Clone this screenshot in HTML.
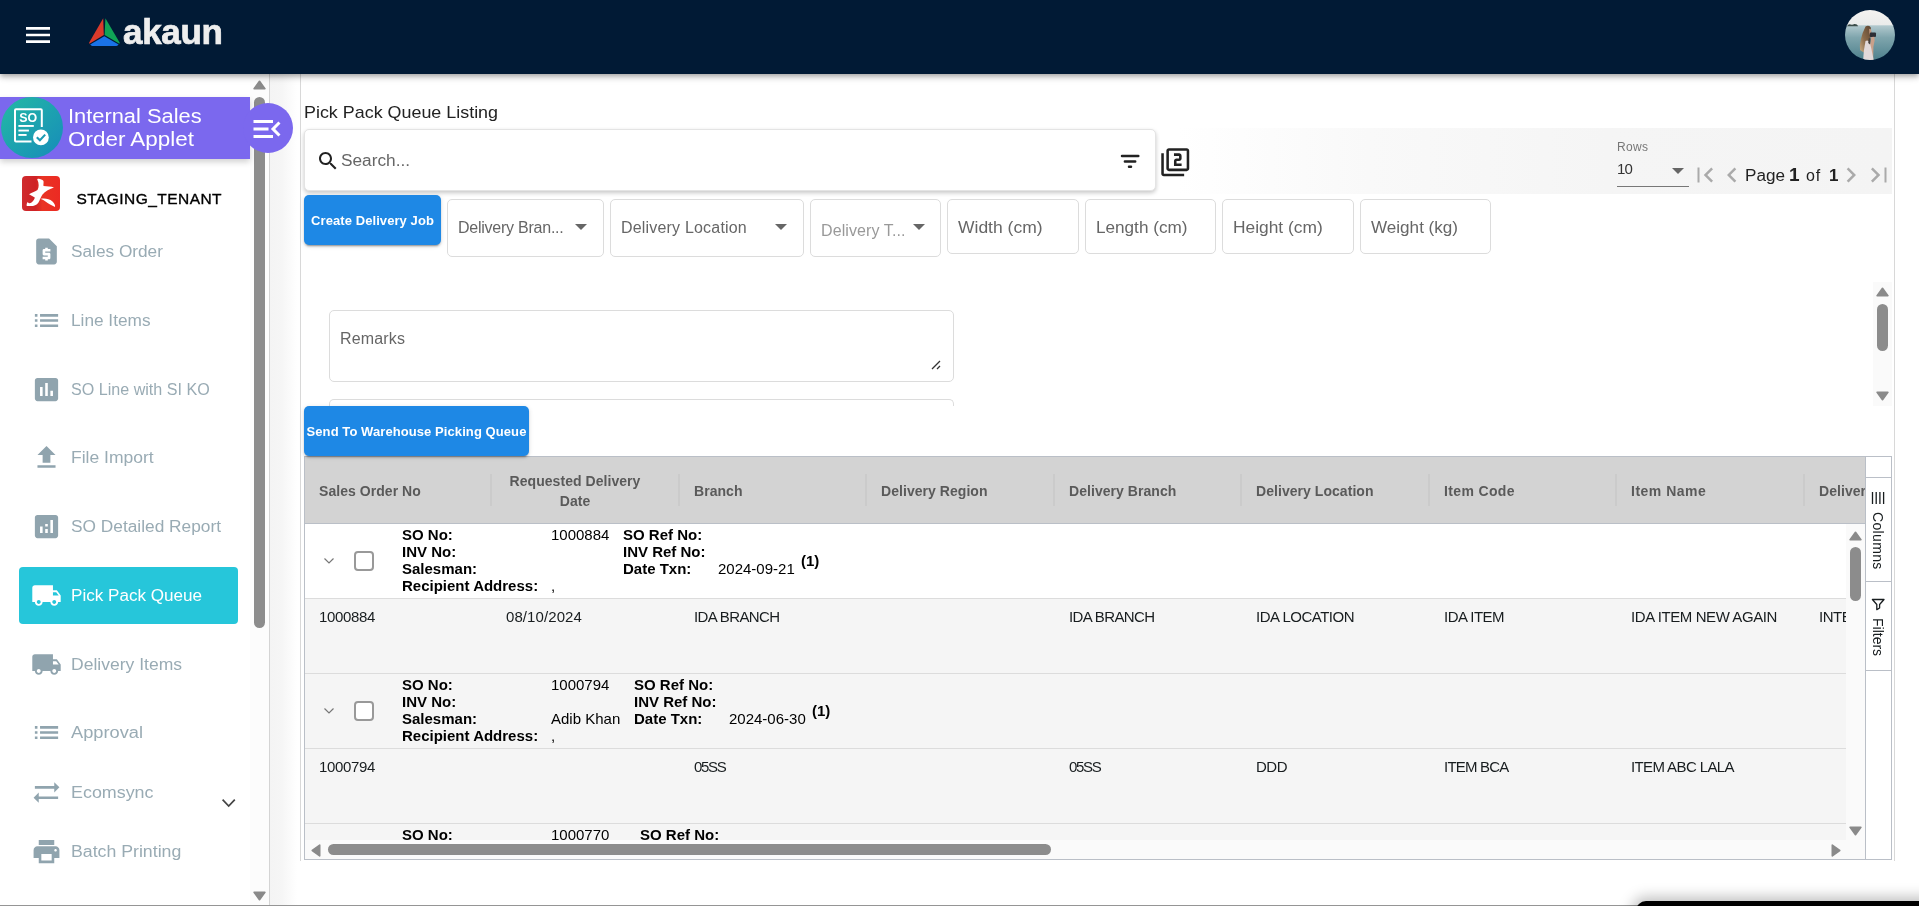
<!DOCTYPE html>
<html lang="en">
<head>
<meta charset="utf-8">
<title>Internal Sales Order Applet - Pick Pack Queue Listing</title>
<style>
*{box-sizing:border-box;margin:0;padding:0}
html,body{width:1919px;height:906px;overflow:hidden;background:#fff}
body{will-change:transform;position:relative;font-family:"Liberation Sans",sans-serif;color:#222}
.abs{position:absolute}
.t{position:absolute;white-space:nowrap;line-height:1;transform-origin:0 50%}
svg{display:block}
/* header */
#hdr{position:absolute;left:0;top:0;width:1919px;height:74px;background:#011a35;box-shadow:0 2px 4px -1px rgba(0,0,0,.2),0 4px 5px 0 rgba(0,0,0,.14),0 1px 10px 0 rgba(0,0,0,.12);z-index:20}
/* sidebar */
#side{position:absolute;left:0;top:74px;width:270px;height:832px;background:#fff;border-right:1px solid #d4d4d4;z-index:5}
.nav{position:absolute;left:19px;width:219px;height:57px;border-radius:4px}
.nav svg{position:absolute;left:11.500px;top:12.500px;width:31px;height:31px;fill:#90a4ae}
.nav span{position:absolute;left:52px;top:0;transform-origin:0 50%;line-height:58px;font-size:16px;color:#99abb4;white-space:nowrap}
.nav.sel{background:#26c6da}
.nav.sel svg{fill:#fff}
.nav.sel span{color:#fff}
/* main */
#gap{position:absolute;left:270px;top:74px;width:30px;height:832px;background:linear-gradient(to right,#f4f4f4 0%,#f6f6f6 40%,#fff 90%)}
#card{position:absolute;left:300px;top:74px;width:1595px;height:787px;border-left:1px solid #d8d8d8;border-right:1px solid #d8d8d8;background:#fff}
.fld{position:absolute;border:1px solid #dcdcdc;border-radius:5px;background:#fff}
.fld span{position:absolute;left:10px;transform-origin:0 50%;font-size:16px;color:#666;white-space:nowrap;line-height:1}
.btn{position:absolute;background:#1e88e5;border-radius:5px;color:#fff;font-weight:700;font-size:13px;text-align:center;white-space:nowrap;box-shadow:0 3px 1px -2px rgba(0,0,0,.2),0 2px 2px 0 rgba(0,0,0,.14),0 1px 5px 0 rgba(0,0,0,.12)}
.tri{position:absolute;width:0;height:0;border-left:6px solid transparent;border-right:6px solid transparent;border-top:6px solid #666}
/* grid */
#grid{position:absolute;left:304px;top:456px;width:1588px;height:404px;border:1px solid #babfc7;background:#fff;overflow:hidden}
.hc{position:absolute;font-size:14px;font-weight:700;color:#5a5a5a;letter-spacing:.05px;line-height:20px;white-space:nowrap}
.sep{position:absolute;top:17px;width:2px;height:32px;background:#cbcbcb}
.row{position:absolute;left:0;width:1543px;height:75px;border-bottom:1px solid #dcdcdc;background:#f5f5f5}
.c{position:absolute;top:9px;font-size:15px;color:#181d1f;white-space:nowrap;line-height:17px;letter-spacing:-.35px}
.g{position:absolute;font-size:15px;line-height:17px;white-space:nowrap;color:#000}
.g b{font-weight:700}
.cb{position:absolute;left:49px;top:27px;width:20px;height:20px;border:2px solid #999;border-radius:4px;background:#fff}
</style>
</head>
<body>

<!-- ================= HEADER ================= -->
<div id="hdr">
  <svg class="abs" style="left:22px;top:19px" width="32" height="32" viewBox="0 0 24 24"><path fill="#fff" d="M3 18h18v-2H3v2zm0-5h18v-2H3v2zm0-7v2h18V6H3z"/></svg>
  <svg class="abs" style="left:88px;top:16.500px" width="33" height="30" viewBox="0 0 33 30">
    <path d="M15.2 1.2 L1.2 25.5 Q0.6 26.8 1.8 26.4 L15.8 18 Z" fill="#d93a2b"/>
    <path d="M17.4 1.2 L31.6 25.5 Q32.2 26.8 31 26.4 L16.6 18 Z" fill="#10a356"/>
    <path d="M16.3 19.2 L2.2 27.6 Q3 29 4.4 29 L28.4 29 Q29.8 29 30.6 27.6 Z" fill="#1a73e8"/>
  </svg>
  <span class="t" id="logo" style="left:123px;top:14px;font-size:35px;font-weight:700;color:#eee;letter-spacing:-.3px;-webkit-text-stroke:.7px #eee">akaun</span>
  <svg class="abs" style="left:1845px;top:10px" width="50" height="50" viewBox="0 0 50 50">
    <defs><clipPath id="av"><circle cx="25" cy="25" r="25"/></clipPath>
    <linearGradient id="sky" x1="0" y1="0" x2="0" y2="1"><stop offset="0" stop-color="#f4f3f1"/><stop offset="1" stop-color="#e9ebea"/></linearGradient>
    <linearGradient id="sea" x1="0" y1="0" x2="0" y2="1"><stop offset="0" stop-color="#b3cacf"/><stop offset=".35" stop-color="#7fa5ad"/><stop offset="1" stop-color="#4d808c"/></linearGradient>
    <linearGradient id="hair" x1="1" y1="0" x2="0" y2="1"><stop offset="0" stop-color="#5a4330"/><stop offset=".55" stop-color="#8a6a4a"/><stop offset="1" stop-color="#c9ad86"/></linearGradient></defs>
    <g clip-path="url(#av)">
      <rect width="50" height="16" fill="url(#sky)"/>
      <rect y="15.300" width="50" height="35" fill="url(#sea)"/>
      <path d="M2 16.200 q1.500 -2.600 3.800 -1.600 q2 .5 3.400 -.6 q2.800 -.4 4 2.200 z" fill="#3c4d4a"/>
      <path d="M20.500 16.500 q3 -1.600 5.200 .8 l.6 5.600 l-1.400 7 l-1.500 5 l-3 8 q-3 -1 -5.400 -3 q-.6 -5 .8 -10.500 q1.300 -6 4.700 -12.900 z" fill="url(#hair)"/>
      <path d="M24.200 19 q1.800 -.6 2 1.400 l-.2 3.600 l-1.600 .600 z" fill="#c79a80"/>
      <rect x="24.800" y="22.400" width="6.200" height="4.600" rx="1" fill="#2b2e35"/>
      <path d="M26.400 27 l3 -.2 l.2 4 l-1.200 6 l-.2 13.200 h-4 l.4 -13 z" fill="#c9a08a"/>
      <path d="M20.500 31 q2.200 -1.400 4.200 1 l1.400 5.500 l2.600 12.500 h-10.500 l.6 -9 z" fill="#e1d9da"/>
      <path d="M23.800 28 l1.800 .4 l-.6 6 l-1.800 -1.500 z" fill="#47403c"/>
    </g>
  </svg>
</div>

<!-- ================= SIDEBAR ================= -->
<div id="side">
  <!-- scrollbar track -->
  <div class="abs" style="left:250px;top:0;width:19px;height:832px;background:#fcfcfc"></div>
  <svg class="abs" style="left:253px;top:5.5px" width="13" height="10" viewBox="0 0 13 10"><path d="M6.500 1.300 L11.900 8.700 H1.100 Z" fill="#8a8a8a" stroke="#8a8a8a" stroke-width="1.600" stroke-linejoin="round"/></svg>
  <div class="abs" style="left:254px;top:23px;width:11px;height:531px;background:#8c8c8c;border-radius:6px"></div>
  <svg class="abs" style="left:253px;top:816.5px" width="13" height="10" viewBox="0 0 13 10"><path d="M6.500 8.700 L11.900 1.300 H1.100 Z" fill="#8a8a8a" stroke="#8a8a8a" stroke-width="1.600" stroke-linejoin="round"/></svg>

  <!-- applet banner -->
  <div class="abs" style="left:0;top:23px;width:250px;height:62px;background:#7b68ee;box-shadow:0 3px 6px rgba(0,0,0,.18)"></div>
  <div class="abs" style="left:243px;top:29px;width:50px;height:50px;border-radius:50%;background:#7b68ee;z-index:3"></div>
  <svg class="abs" style="left:249px;top:37px;z-index:4" width="36" height="36" viewBox="0 0 24 24"><path fill="#fff" d="M3 18h13v-2H3v2zm0-5h10v-2H3v2zm0-7v2h13V6H3zm18 9.59L17.42 12 21 8.41 19.59 7l-5 5 5 5L21 15.59z"/></svg>
  <div class="abs" style="left:.5px;top:23px;width:62px;height:61px;border-radius:50%;background:linear-gradient(135deg,#22b5a6 10%,#1890b8 90%)"></div>
  <svg class="abs" style="left:12px;top:32px" width="40" height="42" viewBox="0 0 40 42">
    <path d="M29.800 21 V4.200 Q29.800 3.150 28.800 3.150 H4 Q3 3.150 3 4.200 V34.600 Q3 35.600 4 35.600 H19.500" fill="none" stroke="#fff" stroke-width="2"/>
    <rect x="6.400" y="19" width="15.400" height="1.900" fill="#fff"/>
    <rect x="6.400" y="23.600" width="10.500" height="1.900" fill="#fff"/>
    <rect x="6.400" y="28" width="8.200" height="1.900" fill="#fff"/>
    <circle cx="28.900" cy="31.400" r="7.900" fill="#fff"/>
    <path d="M24.800 31.200 L27.900 34.200 L33.200 28.600" fill="none" stroke="#1c9ab3" stroke-width="2.100"/>
    <text x="7.300" y="16.100" font-family="Liberation Sans, sans-serif" font-weight="700" font-size="12.400" fill="#fff">SO</text>
  </svg>
  <span class="t" style="left:68px;top:32px;font-size:20px;color:#fff;transform:scaleX(1.092)">Internal Sales</span>
  <span class="t" style="left:68px;top:55px;font-size:20px;color:#fff;transform:scaleX(1.122)">Order Applet</span>

  <!-- tenant -->
  <div class="abs" style="left:22px;top:102px;width:38px;height:35px;border-radius:4px;background:linear-gradient(to right,#cf2b2e 0%,#cf2125 36%,#e93323 54%,#ec2a23 100%)"></div>
  <svg class="abs" style="left:22px;top:102px" width="38" height="35" viewBox="0 0 38 35">
    <path d="M15.200 3.200 C17 2.200 20 3.500 21.500 5 C21.800 7 21.200 8.500 21.500 10 C25 10.200 29 10.500 32 11.500 C28 13 23 15 20.500 18.500 C19 21 18 23 17.500 24.500 C16.500 27.500 14 29.500 11 30 L4.800 30 C4.200 28.500 5 27 5.800 26 C6.500 27.500 8 27.500 9.500 26.500 C11.500 25 12.500 23 12.800 21.500 L7 18.200 C10 16.500 13.500 15.500 15.500 14 C17 11 17.200 7.500 15.200 3.200 Z" fill="#fff"/>
    <path d="M18.300 23 C22 22 27 22.500 30.500 25.500 C32.500 27.500 33.500 29.500 33 31 C30 29.500 26 27.500 23.500 25.500 C21.500 24 20 23.300 18.300 23 Z" fill="#fff"/>
  </svg>
  <span class="t" style="left:76.500px;top:116.500px;font-size:15.500px;color:#000;letter-spacing:.45px;-webkit-text-stroke:.35px #000">STAGING_TENANT</span>

  <!-- nav items -->
  <div class="nav" style="top:149px"><svg viewBox="0 0 24 24"><path d="M14 2H6c-1.1 0-2 .9-2 2v16c0 1.1.9 2 2 2h12c1.1 0 2-.9 2-2V8l-6-6zm1 10h-4v1h3c.55 0 1 .45 1 1v3c0 .55-.45 1-1 1h-1v1h-2v-1H9v-2h4v-1h-3c-.55 0-1-.45-1-1v-3c0-.55.45-1 1-1h1V9h2v1h2v2z"/></svg><span style="transform:scaleX(1.077)">Sales Order</span></div>
  <div class="nav" style="top:218px"><svg viewBox="0 0 24 24"><path d="M3 13h2v-2H3v2zm0 4h2v-2H3v2zm0-8h2V7H3v2zm4 4h14v-2H7v2zm0 4h14v-2H7v2zM7 7v2h14V7H7z"/></svg><span style="transform:scaleX(1.077)">Line Items</span></div>
  <div class="nav" style="top:287px"><svg viewBox="0 0 24 24"><path d="M19 3H5c-1.1 0-2 .9-2 2v14c0 1.1.9 2 2 2h14c1.1 0 2-.9 2-2V5c0-1.1-.9-2-2-2zM9 17H7v-7h2v7zm4 0h-2V7h2v10zm4 0h-2v-4h2v4z"/></svg><span style="transform:scaleX(1.006)">SO Line with SI KO</span></div>
  <div class="nav" style="top:355px"><svg viewBox="0 0 24 24"><path d="M9 16h6v-6h4l-7-7-7 7h4zm-4 2h14v2H5z"/></svg><span style="transform:scaleX(1.094)">File Import</span></div>
  <div class="nav" style="top:424px"><svg viewBox="0 0 24 24"><path d="M19 3H5c-1.1 0-2 .9-2 2v14c0 1.1.9 2 2 2h14c1.1 0 2-.9 2-2V5c0-1.1-.9-2-2-2zM9 17H7v-5h2v5zm4 0h-2v-3h2v3zm0-5h-2v-2h2v2zm4 5h-2V7h2v10z"/></svg><span style="transform:scaleX(1.081)">SO Detailed Report</span></div>
  <div class="nav sel" style="top:493px"><svg viewBox="0 0 24 24"><path d="M20 8h-3V4H3c-1.1 0-2 .9-2 2v11h2c0 1.66 1.34 3 3 3s3-1.34 3-3h6c0 1.66 1.34 3 3 3s3-1.34 3-3h2v-5l-3-4zM6 18.5c-.83 0-1.5-.67-1.5-1.5s.67-1.5 1.5-1.5 1.5.67 1.5 1.5-.67 1.5-1.5 1.5zm13.500-9l1.960 2.500H17V9.500h2.500zm-1.500 9c-.83 0-1.500-.67-1.500-1.500s.67-1.500 1.500-1.500 1.500.67 1.500 1.500-.67 1.500-1.500 1.500z"/></svg><span style="transform:scaleX(1.068)">Pick Pack Queue</span></div>
  <div class="nav" style="top:562px"><svg viewBox="0 0 24 24"><path d="M20 8h-3V4H3c-1.1 0-2 .9-2 2v11h2c0 1.66 1.34 3 3 3s3-1.34 3-3h6c0 1.66 1.34 3 3 3s3-1.340 3-3h2v-5l-3-4zM6 18.500c-.83 0-1.500-.67-1.500-1.500s.67-1.500 1.500-1.500 1.500.67 1.500 1.500-.67 1.500-1.500 1.500zm13.500-9l1.960 2.500H17V9.500h2.500zm-1.500 9c-.83 0-1.500-.67-1.500-1.500s.67-1.500 1.500-1.500 1.500.67 1.500 1.500-.67 1.500-1.500 1.500z"/></svg><span style="transform:scaleX(1.095)">Delivery Items</span></div>
  <div class="nav" style="top:630px"><svg viewBox="0 0 24 24"><path d="M3 13h2v-2H3v2zm0 4h2v-2H3v2zm0-8h2V7H3v2zm4 4h14v-2H7v2zm0 4h14v-2H7v2zM7 7v2h14V7H7z"/></svg><span style="transform:scaleX(1.139)">Approval</span></div>
  <div class="nav" style="top:690px"><svg viewBox="0 0 24 24"><path d="M22 8l-4-4v3H3v2h15v3l4-4zM2 16l4 4v-3h15v-2H6v-3l-4 4z"/></svg><span style="transform:scaleX(1.118)">Ecomsync</span></div>
  <svg class="abs" style="left:220px;top:722px" width="18" height="14" viewBox="0 0 18 14"><path d="M2.600 3.600 L8.700 10 L14.800 3.600" fill="none" stroke="#444" stroke-width="1.700"/></svg>
  <div class="nav" style="top:749px"><svg viewBox="0 0 24 24"><path d="M19 8H5c-1.660 0-3 1.340-3 3v6h4v4h12v-4h4v-6c0-1.660-1.340-3-3-3zm-3 11H8v-5h8v5zm3-7c-.55 0-1-.45-1-1s.45-1 1-1 1 .45 1 1-.45 1-1 1zm-1-9H6v4h12V3z"/></svg><span style="transform:scaleX(1.107)">Batch Printing</span></div>
</div>

<!-- ================= MAIN ================= -->
<div id="gap"></div>
<div id="card">
</div>

<!-- toolbar gradient band -->
<div class="abs" style="left:304px;top:128px;width:1588px;height:66px;background:linear-gradient(to right,#fff 0%,#fff 55%,#f9f9f9 67%,#f5f5f5 82%,#f4f4f4 100%)"></div>

<span class="t" id="title" style="left:304px;top:104px;font-size:17px;color:#222;transform:scaleX(1.053)">Pick Pack Queue Listing</span>

<!-- search box -->
<div class="abs" style="left:304px;top:129px;width:852px;height:62px;background:#fff;border-radius:5px;border:1px solid #e4e4e4;box-shadow:0 2px 4px rgba(0,0,0,.22)"></div>
<svg class="abs" style="left:316px;top:149px" width="24" height="24" viewBox="0 0 24 24"><path fill="#222" d="M15.5 14h-.79l-.28-.27C15.410 12.590 16 11.110 16 9.500 16 5.910 13.090 3 9.500 3S3 5.910 3 9.500 5.910 16 9.500 16c1.610 0 3.090-.59 4.230-1.570l.27.28v.79l5 4.990L20.490 19l-4.990-5zm-6 0C7.010 14 5 11.990 5 9.500S7.010 5 9.500 5 14 7.010 14 9.500 11.990 14 9.500 14z"/></svg>
<span class="t" style="left:341px;top:153px;font-size:16px;color:#666;transform:scaleX(1.078)">Search...</span>
<svg class="abs" style="left:1118px;top:150px" width="24" height="22" viewBox="0 0 24 22"><path d="M4 6 H20.300 M6.900 11.400 H17.200 M11 16.800 H13" fill="none" stroke="#222" stroke-width="2.500" stroke-linecap="round"/></svg>
<svg class="abs" style="left:1159.700px;top:146.700px" width="30.500" height="30.500" viewBox="0 0 24 24"><path fill="#222" d="M3 5H1v16c0 1.100.9 2 2 2h16v-2H3V5zm18-4H7c-1.100 0-2 .9-2 2v14c0 1.100.9 2 2 2h14c1.100 0 2-.9 2-2V3c0-1.100-.9-2-2-2zm0 16H7V3h14v14zm-4-4h-4v-2h2c1.100 0 2-.89 2-2V7c0-1.110-.9-2-2-2h-4v2h4v2h-2c-1.100 0-2 .89-2 2v4h6v-2z"/></svg>

<!-- rows / paginator -->
<span class="t" style="left:1617px;top:141px;font-size:12px;color:#777;letter-spacing:.3px">Rows</span>
<span class="t" style="left:1617px;top:161px;font-size:15px;color:#333;letter-spacing:-.8px">10</span>
<div class="abs" style="left:1617px;top:186px;width:72px;height:1px;background:#777"></div>
<div class="tri" style="left:1672px;top:168px"></div>
<svg class="abs" style="left:1690px;top:160px" width="30" height="30" viewBox="0 0 24 24"><path fill="#aaa" d="M18.410 16.590L13.820 12l4.590-4.590L17 6l-6 6 6 6zM6 6h1.600v12H6z"/></svg>
<svg class="abs" style="left:1717px;top:160px" width="30" height="30" viewBox="0 0 24 24"><path fill="#aaa" d="M15.410 7.410L14 6l-6 6 6 6 1.410-1.410L10.830 12z"/></svg>
<span class="t" style="left:1745px;top:168px;font-size:16px;color:#222;transform:scaleX(1.07)">Page</span>
<span class="t" style="left:1789px;top:165px;font-size:19px;font-weight:700;color:#222">1</span>
<span class="t" style="left:1806px;top:168px;font-size:16px;color:#222;letter-spacing:.9px">of</span>
<span class="t" style="left:1829px;top:167px;font-size:17px;font-weight:700;color:#222">1</span>
<svg class="abs" style="left:1836px;top:160px" width="30" height="30" viewBox="0 0 24 24"><path fill="#aaa" d="M10 6L8.590 7.410 13.170 12l-4.580 4.590L10 18l6-6z"/></svg>
<svg class="abs" style="left:1864px;top:160px" width="30" height="30" viewBox="0 0 24 24"><path fill="#aaa" d="M5.590 7.410L10.180 12l-4.590 4.590L7 18l6-6-6-6zM16.400 6H18v12h-1.600z"/></svg>

<!-- button + fields row -->
<div class="btn" style="left:304px;top:195px;width:137px;height:50px;line-height:52px;letter-spacing:.08px">Create Delivery Job</div>
<div class="fld" style="left:447px;top:199px;width:157px;height:58px"><span style="top:19.500px;letter-spacing:-.24px">Delivery Bran...</span><i class="tri" style="left:127px;top:24px"></i></div>
<div class="fld" style="left:610px;top:199px;width:194px;height:58px"><span style="top:19.500px;letter-spacing:.19px">Delivery Location</span><i class="tri" style="left:164px;top:24px"></i></div>
<div class="fld" style="left:810px;top:199px;width:131px;height:58px"><span style="top:22.500px;color:#999;letter-spacing:.1px">Delivery T...</span><i class="tri" style="left:102px;top:24px"></i></div>
<div class="fld" style="left:947px;top:199px;width:132px;height:55px"><span style="top:20px;transform:scaleX(1.093)">Width (cm)</span></div>
<div class="fld" style="left:1085px;top:199px;width:131px;height:55px"><span style="top:20px;transform:scaleX(1.071)">Length (cm)</span></div>
<div class="fld" style="left:1222px;top:199px;width:132px;height:55px"><span style="top:20px;transform:scaleX(1.085)">Height (cm)</span></div>
<div class="fld" style="left:1360px;top:199px;width:131px;height:55px"><span style="top:20px;transform:scaleX(1.068)">Weight (kg)</span></div>

<!-- inner scroll area -->
<div class="abs" style="left:1873px;top:282px;width:19px;height:124px;background:#fafafa"></div>
<svg class="abs" style="left:1876px;top:286.5px" width="13" height="10" viewBox="0 0 13 10"><path d="M6.500 1.300 L11.900 8.700 H1.100 Z" fill="#8a8a8a" stroke="#8a8a8a" stroke-width="1.600" stroke-linejoin="round"/></svg>
<div class="abs" style="left:1877px;top:304px;width:11px;height:47px;background:#8c8c8c;border-radius:6px"></div>
<svg class="abs" style="left:1876px;top:390.5px" width="13" height="10" viewBox="0 0 13 10"><path d="M6.500 8.700 L11.900 1.300 H1.100 Z" fill="#8a8a8a" stroke="#8a8a8a" stroke-width="1.600" stroke-linejoin="round"/></svg>
<div class="fld" style="left:329px;top:310px;width:625px;height:72px"><span style="top:19.500px;letter-spacing:.15px">Remarks</span>
  <svg class="abs" style="left:600px;top:48px" width="12" height="12" viewBox="0 0 12 12"><path d="M2 10 L10 2 M7 10 L10 7" stroke="#333" stroke-width="1.3" fill="none"/></svg>
</div>
<div class="abs" style="left:329px;top:399px;width:625px;height:7px;border:1px solid #dcdcdc;border-bottom:none;border-radius:5px 5px 0 0"></div>

<div class="btn" style="left:304px;top:406px;width:225px;height:50px;line-height:52px;letter-spacing:.08px;z-index:2">Send To Warehouse Picking Queue</div>

<!-- GRID -->
<div id="grid">
  <!-- header -->
  <div class="abs" style="left:0;top:0;width:1560px;height:67px;background:#d3d3d3;border-bottom:1px solid #babfc7;overflow:hidden">
    <div class="hc" style="left:14px;top:23.500px">Sales Order No</div>
    <div class="hc" style="left:176px;top:13.500px;width:188px;text-align:center">Requested Delivery<br>Date</div>
    <div class="hc" style="left:389px;top:23.500px">Branch</div>
    <div class="hc" style="left:576px;top:23.500px">Delivery Region</div>
    <div class="hc" style="left:764px;top:23.500px">Delivery Branch</div>
    <div class="hc" style="left:951px;top:23.500px">Delivery Location</div>
    <div class="hc" style="left:1139px;top:23.500px;letter-spacing:.35px">Item Code</div>
    <div class="hc" style="left:1326px;top:23.500px;letter-spacing:.5px">Item Name</div>
    <div class="hc" style="left:1514px;top:23.500px">Delivery</div>
    <i class="sep" style="left:185px"></i><i class="sep" style="left:373px"></i><i class="sep" style="left:560px"></i><i class="sep" style="left:748px"></i>
    <i class="sep" style="left:935px"></i><i class="sep" style="left:1123px"></i><i class="sep" style="left:1310px"></i><i class="sep" style="left:1498px"></i>
  </div>

  <!-- body rows (clipped viewport) -->
  <div class="abs" style="left:0;top:67px;width:1541px;height:316px;overflow:hidden;background:#f5f5f5">
    <!-- group row 1 -->
    <div class="row" style="top:0;background:#fff">
      <svg class="abs" style="left:16px;top:29px" width="16" height="16" viewBox="0 0 16 16"><path d="M3.500 5.500 L8 10 L12.500 5.500" fill="none" stroke="#777" stroke-width="1.2"/></svg>
      <i class="cb"></i>
      <div class="g" style="left:97px;top:2px"><b>SO No:<br>INV No:<br>Salesman:<br>Recipient Address:</b></div>
      <div class="g" style="left:246px;top:2px">1000884<br><br><br>,</div>
      <div class="g" style="left:318px;top:2px"><b>SO Ref No:<br>INV Ref No:<br>Date Txn:</b></div>
      <div class="g" style="left:413px;top:36px">2024-09-21</div>
      <div class="g" style="left:496px;top:28px"><b>(1)</b></div>
    </div>
    <!-- data row 1 -->
    <div class="row" style="top:75px">
      <span class="c" style="left:14px">1000884</span>
      <span class="c" style="left:201px;letter-spacing:.09px">08/10/2024</span>
      <span class="c" style="left:389px;letter-spacing:-.62px">IDA BRANCH</span>
      <span class="c" style="left:764px;letter-spacing:-.62px">IDA BRANCH</span>
      <span class="c" style="left:951px;letter-spacing:-.49px">IDA LOCATION</span>
      <span class="c" style="left:1139px;letter-spacing:-.52px">IDA ITEM</span>
      <span class="c" style="left:1326px;letter-spacing:-.41px">IDA ITEM NEW AGAIN</span>
      <span class="c" style="left:1514px;letter-spacing:-.5px">INTERNAL</span>
    </div>
    <!-- group row 2 -->
    <div class="row" style="top:150px">
      <svg class="abs" style="left:16px;top:29px" width="16" height="16" viewBox="0 0 16 16"><path d="M3.500 5.500 L8 10 L12.500 5.500" fill="none" stroke="#777" stroke-width="1.2"/></svg>
      <i class="cb"></i>
      <div class="g" style="left:97px;top:2px"><b>SO No:<br>INV No:<br>Salesman:<br>Recipient Address:</b></div>
      <div class="g" style="left:246px;top:2px">1000794<br><br>Adib Khan<br>,</div>
      <div class="g" style="left:329px;top:2px"><b>SO Ref No:<br>INV Ref No:<br>Date Txn:</b></div>
      <div class="g" style="left:424px;top:36px">2024-06-30</div>
      <div class="g" style="left:507px;top:28px"><b>(1)</b></div>
    </div>
    <!-- data row 2 -->
    <div class="row" style="top:225px">
      <span class="c" style="left:14px">1000794</span>
      <span class="c" style="left:389px;letter-spacing:-1.3px">05SS</span>
      <span class="c" style="left:764px;letter-spacing:-1.3px">05SS</span>
      <span class="c" style="left:951px;letter-spacing:-.5px">DDD</span>
      <span class="c" style="left:1139px;letter-spacing:-.79px">ITEM BCA</span>
      <span class="c" style="left:1326px;letter-spacing:-.61px">ITEM ABC LALA</span>
    </div>
    <!-- group row 3 (partially visible) -->
    <div class="row" style="top:300px">
      <i class="cb"></i>
      <div class="g" style="left:97px;top:2px"><b>SO No:<br>INV No:<br>Salesman:<br>Recipient Address:</b></div>
      <div class="g" style="left:246px;top:2px">1000770<br><br><br>,</div>
      <div class="g" style="left:335px;top:2px"><b>SO Ref No:<br>INV Ref No:<br>Date Txn:</b></div>
    </div>
  </div>

  <!-- vertical scrollbar -->
  <div class="abs" style="left:1541px;top:67px;width:19px;height:335px;background:#fafafa"></div>
  <svg class="abs" style="left:1544px;top:73.5px" width="13" height="10" viewBox="0 0 13 10"><path d="M6.500 1.300 L11.900 8.700 H1.100 Z" fill="#8a8a8a" stroke="#8a8a8a" stroke-width="1.600" stroke-linejoin="round"/></svg>
  <div class="abs" style="left:1545px;top:90px;width:11px;height:54px;background:#8c8c8c;border-radius:6px"></div>
  <svg class="abs" style="left:1544px;top:368.5px" width="13" height="10" viewBox="0 0 13 10"><path d="M6.500 8.700 L11.900 1.300 H1.100 Z" fill="#8a8a8a" stroke="#8a8a8a" stroke-width="1.600" stroke-linejoin="round"/></svg>

  <!-- horizontal scrollbar -->
  <div class="abs" style="left:0;top:383px;width:1541px;height:19px;background:#fafafa"></div>
  <svg class="abs" style="left:5.5px;top:387px" width="10" height="13" viewBox="0 0 10 13"><path d="M1.300 6.500 L8.700 11.900 V1.100 Z" fill="#8a8a8a" stroke="#8a8a8a" stroke-width="1.600" stroke-linejoin="round"/></svg>
  <div class="abs" style="left:23px;top:387px;width:723px;height:11px;background:#8c8c8c;border-radius:6px"></div>
  <svg class="abs" style="left:1525.5px;top:387px" width="10" height="13" viewBox="0 0 10 13"><path d="M8.700 6.500 L1.300 11.900 V1.100 Z" fill="#8a8a8a" stroke="#8a8a8a" stroke-width="1.600" stroke-linejoin="round"/></svg>

  <!-- side tool panel -->
  <div class="abs" style="left:1560px;top:0;width:26px;height:402px;border-left:1px solid #babfc7;background:#fff">
    <div class="abs" style="left:0;top:20px;width:25px;height:1px;background:#babfc7"></div>
    <div class="abs" style="left:0;top:124px;width:25px;height:1px;background:#babfc7"></div>
    <div class="abs" style="left:0;top:213px;width:25px;height:1px;background:#babfc7"></div>
    <svg class="abs" style="left:5px;top:35px" width="14" height="12" viewBox="0 0 14 12"><path d="M1.500 0v12M5.200 0v12M8.900 0v12M12.600 0v12" stroke="#181d1f" stroke-width="1.3" fill="none"/></svg>
    <span class="t" style="left:19px;top:55px;font-size:14px;color:#181d1f;transform-origin:0 0;transform:rotate(90deg);letter-spacing:.35px">Columns</span>
    <svg class="abs" style="left:5px;top:141px" width="15" height="14" viewBox="0 0 15 14"><path d="M1.400 1.500 H13 L8.600 6.500 V10 L5.800 11.600 V6.500 Z" fill="none" stroke="#181d1f" stroke-width="1.300" stroke-linejoin="round"/></svg>
    <span class="t" style="left:19px;top:161px;font-size:14px;color:#181d1f;transform-origin:0 0;transform:rotate(90deg)">Filters</span>
  </div>
</div>

<!-- bottom line + floating dark panel -->
<div class="abs" style="left:0;top:904.500px;width:1919px;height:1.500px;background:#959595;z-index:30"></div>
<div class="abs" style="left:1590px;top:870px;width:329px;height:36px;overflow:hidden;z-index:31"><div class="abs" style="left:46px;top:30.500px;width:300px;height:20px;background:#000;border-radius:10px 0 0 0;box-shadow:0 0 14px 4px rgba(0,0,0,.25)"></div></div>

</body>
</html>
